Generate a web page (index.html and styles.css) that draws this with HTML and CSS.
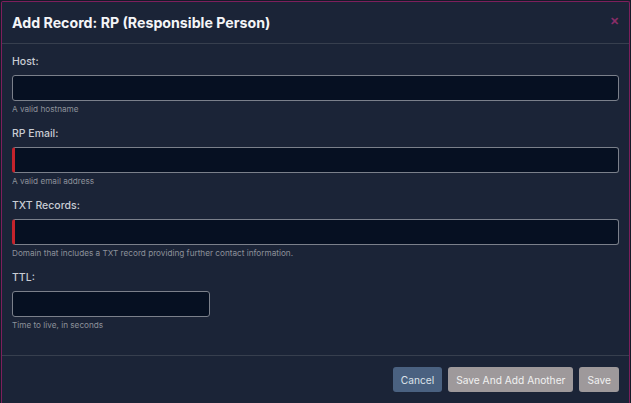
FILE: index.html
```html
<!DOCTYPE html>
<html lang="en">
<head>
<meta charset="utf-8">
<title>Add Record</title>
<link rel="stylesheet" href="styles.css">
</head>
<body>
<div class="modal">
  <div class="modal-header">
    <h2 class="modal-title">Add Record: RP (Responsible Person)</h2>
    <span class="close">&#x2715;</span>
  </div>
  <div class="modal-body">
    <div class="field">
      <label class="label">Host:</label>
      <div class="input"></div>
      <div class="help">A valid hostname</div>
    </div>
    <div class="field">
      <label class="label">RP Email:</label>
      <div class="input invalid"></div>
      <div class="help">A valid email address</div>
    </div>
    <div class="field">
      <label class="label">TXT Records:</label>
      <div class="input invalid"></div>
      <div class="help">Domain that includes a TXT record providing further contact information.</div>
    </div>
    <div class="field">
      <label class="label">TTL:</label>
      <div class="input short"></div>
      <div class="help">Time to live, in seconds</div>
    </div>
  </div>
  <div class="modal-footer">
    <button class="btn btn-cancel">Cancel</button>
    <button class="btn btn-grey">Save And Add Another</button>
    <button class="btn btn-grey">Save</button>
  </div>
</div>
</body>
</html>
```

FILE: styles.css
```css
html, body {
  margin: 0;
  padding: 0;
  background: #151b28;
  height: 100%;
  overflow: hidden;
}
body {
  font-family: Inter, "Noto Sans", sans-serif;
  padding-top: 1px;
  padding-left: 1px;
}
.modal {
  width: 627px;
  background: #1b2437;
  border: 1px solid #7d1f5c;
  border-bottom: none;
  border-radius: 2px 2px 0 0;
}
.modal-header {
  height: 41px;
  padding: 0 10px;
  display: flex;
  align-items: center;
  justify-content: space-between;
  border-bottom: 1px solid #373f4e;
}
.modal-title {
  margin: 0;
  font-size: 14.2px;
  font-weight: 700;
  color: #f4f5f7;
  letter-spacing: 0;
}
.close {
  color: #8a2d68;
  font-size: 11px;
  font-weight: 700;
  margin-top: -3px;
}
.modal-body {
  padding: 12px 10px 24px;
  display: flex;
  flex-direction: column;
  gap: 13px;
}
.field {
  display: flex;
  flex-direction: column;
}
.label {
  font-size: 10.5px;
  line-height: 12px;
  font-weight: 500;
  color: #c9ccd3;
  margin-bottom: 7px;
}
.input {
  height: 24px;
  background: #061022;
  border: 1px solid #7b808b;
  border-radius: 3px;
}
.input.invalid {
  border-left: 3px solid #c4232c;
}
.input.short {
  width: 196px;
}
.help {
  font-size: 8.2px;
  line-height: 11px;
  margin-top: 3px;
  color: #8d919a;
}
.modal-footer {
  border-top: 1px solid #373f4e;
  padding: 11px 10px 12px;
  display: flex;
  justify-content: flex-end;
  gap: 6px;
}
.btn {
  height: 25px;
  border: none;
  border-radius: 3px;
  padding: 0 8px;
  font-family: Inter, "Noto Sans", sans-serif;
  font-size: 10.2px;
  cursor: pointer;
}
.btn-cancel {
  background: #4a6180;
  color: #dde3ea;
}
.btn-grey {
  background: #9e999b;
  color: #f1f1f1;
}
```
